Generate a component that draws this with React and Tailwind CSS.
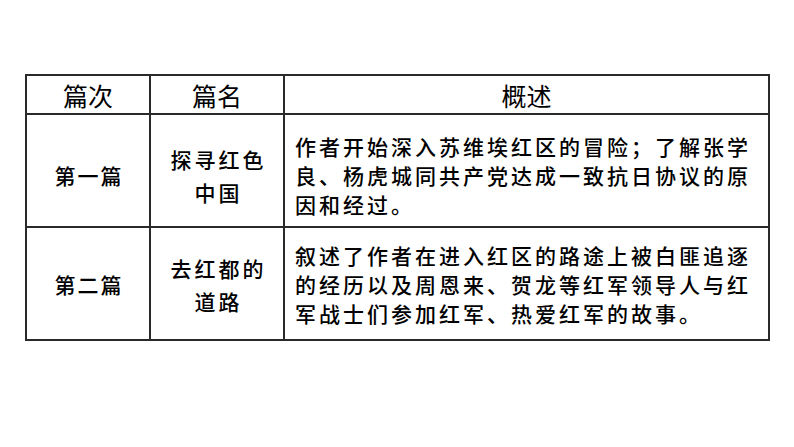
const rows = [
  {
    no: '第一篇',
    name: ['探寻红色', '中国'],
    summary: '作者开始深入苏维埃红区的冒险；了解张学良、杨虎城同共产党达成一致抗日协议的原因和经过。',
    pad: 'pt-[10px]',
  },
  {
    no: '第二篇',
    name: ['去红都的', '道路'],
    summary: '叙述了作者在进入红区的路途上被白匪追逐的经历以及周恩来、贺龙等红军领导人与红军战士们参加红军、热爱红军的故事。',
    pad: 'pt-[2px]',
  },
];

export default function App() {
  return (
    <div
      className="w-[794px] h-[447px] bg-white overflow-hidden pt-[74px] pl-[25px] text-black"
      style={{ fontFamily: '"Noto Sans CJK SC", "Noto Sans", sans-serif' }}
    >
      <table className="border-collapse table-fixed">
        <colgroup>
          <col className="w-[124px]" />
          <col className="w-[134px]" />
          <col className="w-[485px]" />
        </colgroup>
        <thead>
          <tr className="h-[39px] text-[25px] leading-[30px]">
            <th className="border-2 border-[#2a2a2a] font-normal text-center">篇次</th>
            <th className="border-2 border-[#2a2a2a] font-normal text-center">篇名</th>
            <th className="border-2 border-[#2a2a2a] font-normal text-center">概述</th>
          </tr>
        </thead>
        <tbody>
          {rows.map((r) => (
            <tr key={r.no} className="h-[113px] text-[21px] font-medium">
              <td className={`border-2 border-[#2a2a2a] text-center align-middle tracking-[2px] pl-[2px] ${r.pad}`}>
                {r.no}
              </td>
              <td className={`border-2 border-[#2a2a2a] text-center align-middle tracking-[3px] pl-[3px] leading-[33px] ${r.pad}`}>
                {r.name[0]}
                <br />
                {r.name[1]}
              </td>
              <td className={`border-2 border-[#2a2a2a] align-middle tracking-[3px] leading-[29px] pl-[10px] pr-[8px] ${r.pad}`}>
                {r.summary}
              </td>
            </tr>
          ))}
        </tbody>
      </table>
    </div>
  );
}
